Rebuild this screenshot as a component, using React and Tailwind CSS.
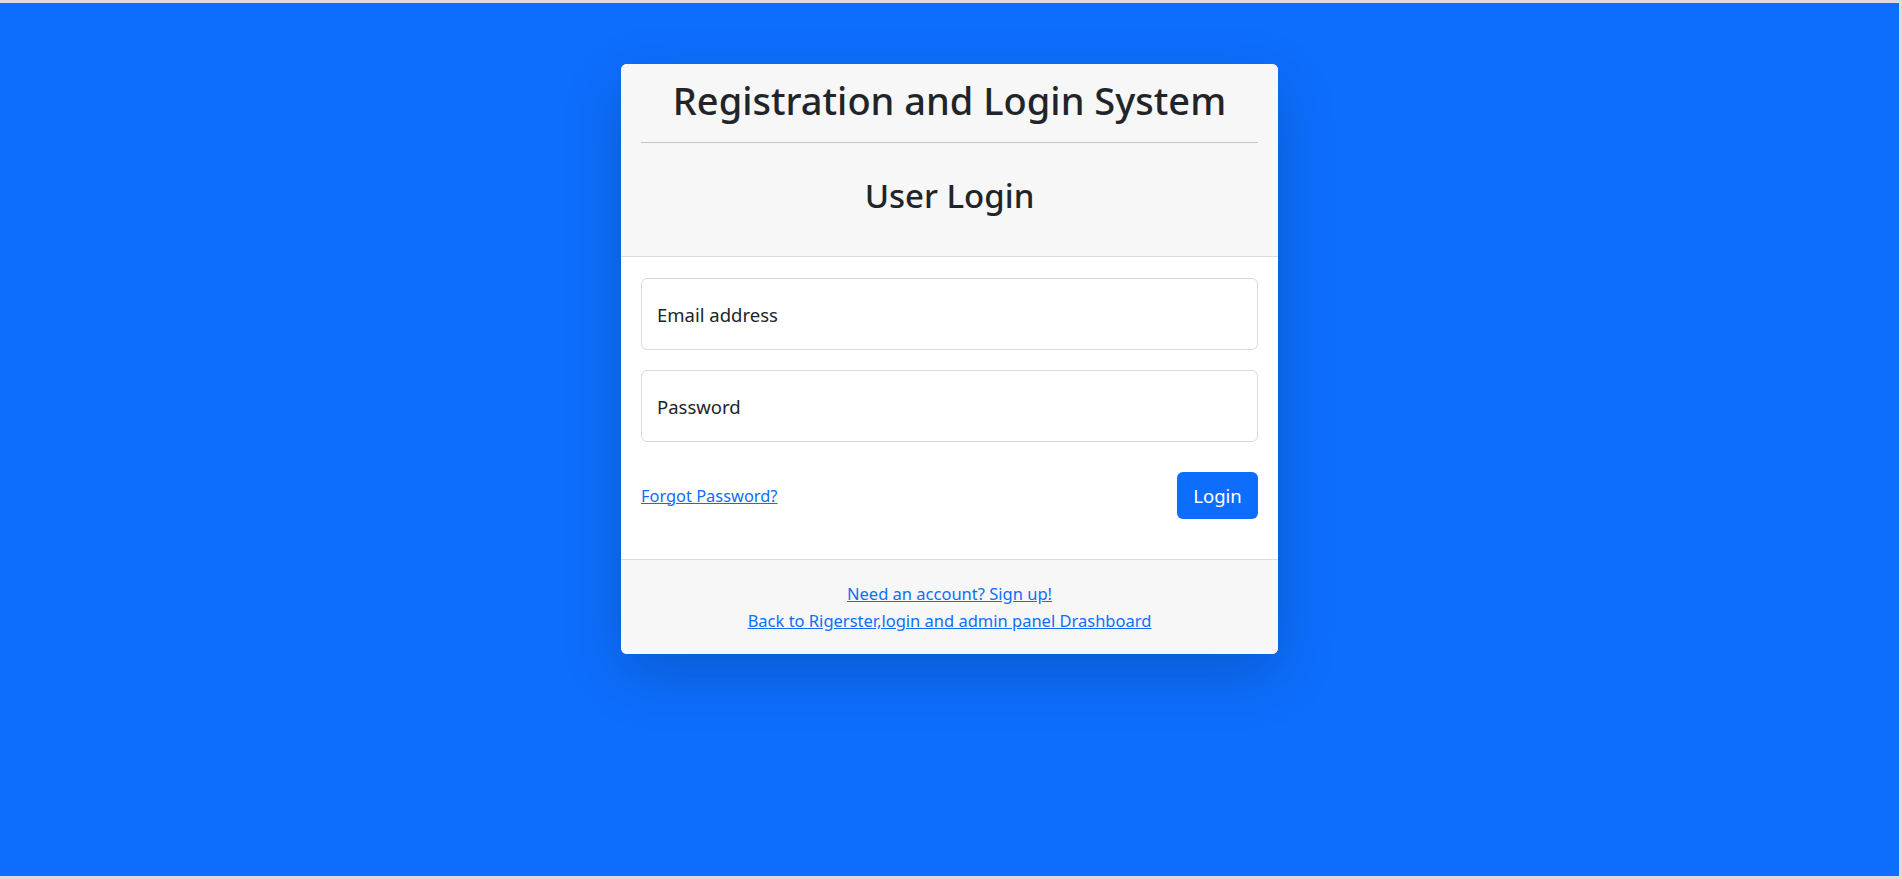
import React, { useState } from 'react'

const App = () => {
  const [email, setEmail] = useState('')
  const [password, setPassword] = useState('')

  return (
    <div className="h-[879px] w-full bg-[#dcdcdc] pt-[3px] pr-[3px] pb-[3px] font-['Noto_Sans',sans-serif] text-[#212529]">
      <div className="h-full w-full bg-[#0d6efd] pt-[61px]">
        <div className="mx-auto w-[657px] rounded-[6px] bg-white shadow-[0_20px_60px_rgba(0,0,0,0.175)] overflow-hidden">
          {/* Header */}
          <div className="bg-[#f7f7f7] border-b border-[#dcdcdc] px-5 pt-[15px] pb-[11px] text-center">
            <h3 className="text-[38px] leading-[42px] font-medium">Registration and Login System</h3>
            <hr className="mt-[21px] border-t border-[#c4c4c4]" />
            <h3 className="mt-[32px] mb-[28px] text-[33px] leading-[42px] font-medium">User Login</h3>
          </div>

          {/* Body */}
          <div className="px-5 pt-[21px] pb-[40px]">
            <form onSubmit={(e) => e.preventDefault()}>
              <div className="mb-5">
                <input
                  type="email"
                  value={email}
                  onChange={(e) => setEmail(e.target.value)}
                  placeholder="Email address"
                  className="block w-full h-[72px] rounded-[6px] border border-[#d9d9d9] bg-white px-[15px] text-[18.5px] text-[#212529] placeholder:text-[#212529] outline-none"
                />
              </div>
              <div>
                <input
                  type="password"
                  value={password}
                  onChange={(e) => setPassword(e.target.value)}
                  placeholder="Password"
                  className="block w-full h-[72px] rounded-[6px] border border-[#d9d9d9] bg-white px-[15px] text-[18.5px] text-[#212529] placeholder:text-[#212529] outline-none"
                />
              </div>
              <div className="mt-[30px] flex items-center justify-between">
                <a href="#" className="text-[16.4px] leading-[26px] text-[#0d6efd] underline">Forgot Password?</a>
                <button type="submit" className="h-[47px] w-[81px] rounded-[6px] bg-[#0d6efd] text-[18.5px] text-white">Login</button>
              </div>
            </form>
          </div>

          {/* Footer */}
          <div className="bg-[#f7f7f7] border-t border-[#dcdcdc] py-5 text-center text-[16.5px] leading-[27px]">
            <div><a href="#" className="text-[#0d6efd] underline">Need an account? Sign up!</a></div>
            <div><a href="#" className="text-[#0d6efd] underline">Back to Rigerster,login and admin panel Drashboard</a></div>
          </div>
        </div>
      </div>
    </div>
  )
}

export default App
